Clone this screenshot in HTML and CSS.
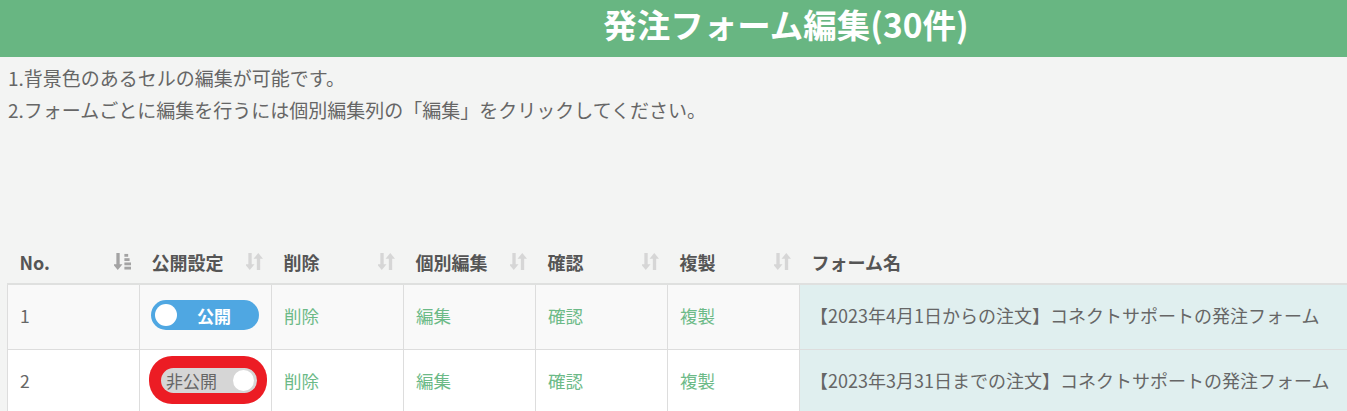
FILE: index.html
```html
<!DOCTYPE html>
<html lang="ja">
<head>
    <meta charset="UTF-8">
    <meta name="viewport" content="width=device-width, initial-scale=1.0">
    <title>発注フォーム編集</title>
    <link rel="stylesheet" href="styles.css">
</head>
<body>
    <header class="page-head">
        <h1>発注フォーム編集(30件)</h1>
    </header>

    <div class="notes">
        <p>1.背景色のあるセルの編集が可能です。</p>
        <p>2.フォームごとに編集を行うには個別編集列の「編集」をクリックしてください。</p>
    </div>

    <table class="form-table">
        <thead>
            <tr>
                <th class="col">
                    <div class="th-inner">No.
                        <svg class="sort active" viewBox="0 0 18 20"><path d="M2.5 1h3.5v12h3l-5 6-5-6h3.5z"/><rect x="11" y="2" width="4" height="3"/><rect x="11" y="6.5" width="5.5" height="3"/><rect x="11" y="11" width="7" height="3"/><rect x="11" y="15.5" width="7" height="3"/></svg>
                    </div>
                </th>
                <th class="col">
                    <div class="th-inner">公開設定
                        <svg class="sort" viewBox="0 0 18 20"><path d="M2.5 1h3.5v12h3l-5 6-5-6h3.5zM11.5 19h3.5V7h3l-5-6-5 6h3.5z"/></svg>
                    </div>
                </th>
                <th class="col">
                    <div class="th-inner">削除
                        <svg class="sort" viewBox="0 0 18 20"><path d="M2.5 1h3.5v12h3l-5 6-5-6h3.5zM11.5 19h3.5V7h3l-5-6-5 6h3.5z"/></svg>
                    </div>
                </th>
                <th class="col">
                    <div class="th-inner">個別編集
                        <svg class="sort" viewBox="0 0 18 20"><path d="M2.5 1h3.5v12h3l-5 6-5-6h3.5zM11.5 19h3.5V7h3l-5-6-5 6h3.5z"/></svg>
                    </div>
                </th>
                <th class="col">
                    <div class="th-inner">確認
                        <svg class="sort" viewBox="0 0 18 20"><path d="M2.5 1h3.5v12h3l-5 6-5-6h3.5zM11.5 19h3.5V7h3l-5-6-5 6h3.5z"/></svg>
                    </div>
                </th>
                <th class="col">
                    <div class="th-inner">複製
                        <svg class="sort" viewBox="0 0 18 20"><path d="M2.5 1h3.5v12h3l-5 6-5-6h3.5zM11.5 19h3.5V7h3l-5-6-5 6h3.5z"/></svg>
                    </div>
                </th>
                <th class="name-col">
                    <div class="th-inner">フォーム名</div>
                </th>
            </tr>
        </thead>
        <tbody>
            <tr class="odd">
                <td>1</td>
                <td><span class="toggle on"><span class="knob"></span>公開</span></td>
                <td><a href="#">削除</a></td>
                <td><a href="#">編集</a></td>
                <td><a href="#">確認</a></td>
                <td><a href="#">複製</a></td>
                <td class="name">【2023年4月1日からの注文】コネクトサポートの発注フォーム</td>
            </tr>
            <tr>
                <td>2</td>
                <td><span class="mark"><span class="toggle off">非公開<span class="knob"></span></span></span></td>
                <td><a href="#">削除</a></td>
                <td><a href="#">編集</a></td>
                <td><a href="#">確認</a></td>
                <td><a href="#">複製</a></td>
                <td class="name">【2023年3月31日までの注文】コネクトサポートの発注フォーム</td>
            </tr>
        </tbody>
    </table>
</body>
</html>
```

FILE: styles.css
```css
body {
    font-family: "Noto Sans CJK JP", "Noto Sans", sans-serif;
    background: #f3f4f3;
    color: #666;
    margin: 0;
    padding: 0;
    overflow: hidden;
}

.page-head {
    height: 57px;
    box-sizing: border-box;
    background: #68b682;
    display: flex;
    align-items: center;
    justify-content: center;
    padding: 0 0 10px 225px;
}

.page-head h1 {
    margin: 0;
    color: #ffffff;
    font-size: 33.5px;
    font-weight: bold;
    line-height: 1;
}

.notes {
    padding: 5px 8px 0;
}

.notes p {
    margin: 0;
    font-size: 19px;
    line-height: 32px;
    color: #666;
}

.form-table {
    margin: 117px 0 0 7px;
    border-collapse: collapse;
    width: 1360px;
    table-layout: fixed;
}

.form-table th {
    height: 37px;
    padding: 0 9px 3px 12px;
    text-align: left;
    font-size: 18px;
    font-weight: bold;
    color: #555;
    border-bottom: 2px solid #dfe0df;
}

.form-table th.col {
    width: 111px;
}

.th-inner {
    display: flex;
    align-items: center;
    justify-content: space-between;
}

.sort {
    width: 17px;
    height: 19px;
    fill: #d6d6d6;
}

.sort.active {
    fill: #a3a3a3;
}

.form-table td {
    height: 60px;
    padding: 0 12px 4px;
    font-size: 17.5px;
    border: 1px solid #dddddd;
    background: #ffffff;
    white-space: nowrap;
}

.form-table tr.odd td {
    background: #f9f9f9;
}

.form-table td.name,
.form-table tr.odd td.name {
    background: #e0efef;
    padding-left: 10px;
    font-size: 18px;
    border-right: none;
}

.form-table a {
    color: #6cba87;
    text-decoration: none;
}

.toggle {
    display: inline-flex;
    align-items: center;
    border-radius: 15px;
    font-size: 17px;
    line-height: 1;
    vertical-align: middle;
}

.toggle.on {
    width: 108px;
    height: 30px;
    background: #4fa7e2;
    color: #ffffff;
    font-weight: bold;
    box-sizing: border-box;
    padding-left: 4px;
    margin-left: -1px;
}

.toggle.on .knob {
    margin-right: 20px;
}

.knob {
    width: 22px;
    height: 22px;
    border-radius: 50%;
    background: #ffffff;
}

.mark {
    display: inline-block;
    vertical-align: middle;
    padding: 10px 10px 11px 12px;
    margin-left: -3px;
    background: #ec1c24;
    border-radius: 23px;
}

.toggle.off {
    width: 96px;
    height: 25px;
    box-sizing: border-box;
    padding: 0 3px 0 5px;
    justify-content: space-between;
    background: #d6d6d6;
    color: #666;
    border-radius: 13px;
}

.toggle.off .knob {
    width: 21px;
    height: 21px;
}
```
